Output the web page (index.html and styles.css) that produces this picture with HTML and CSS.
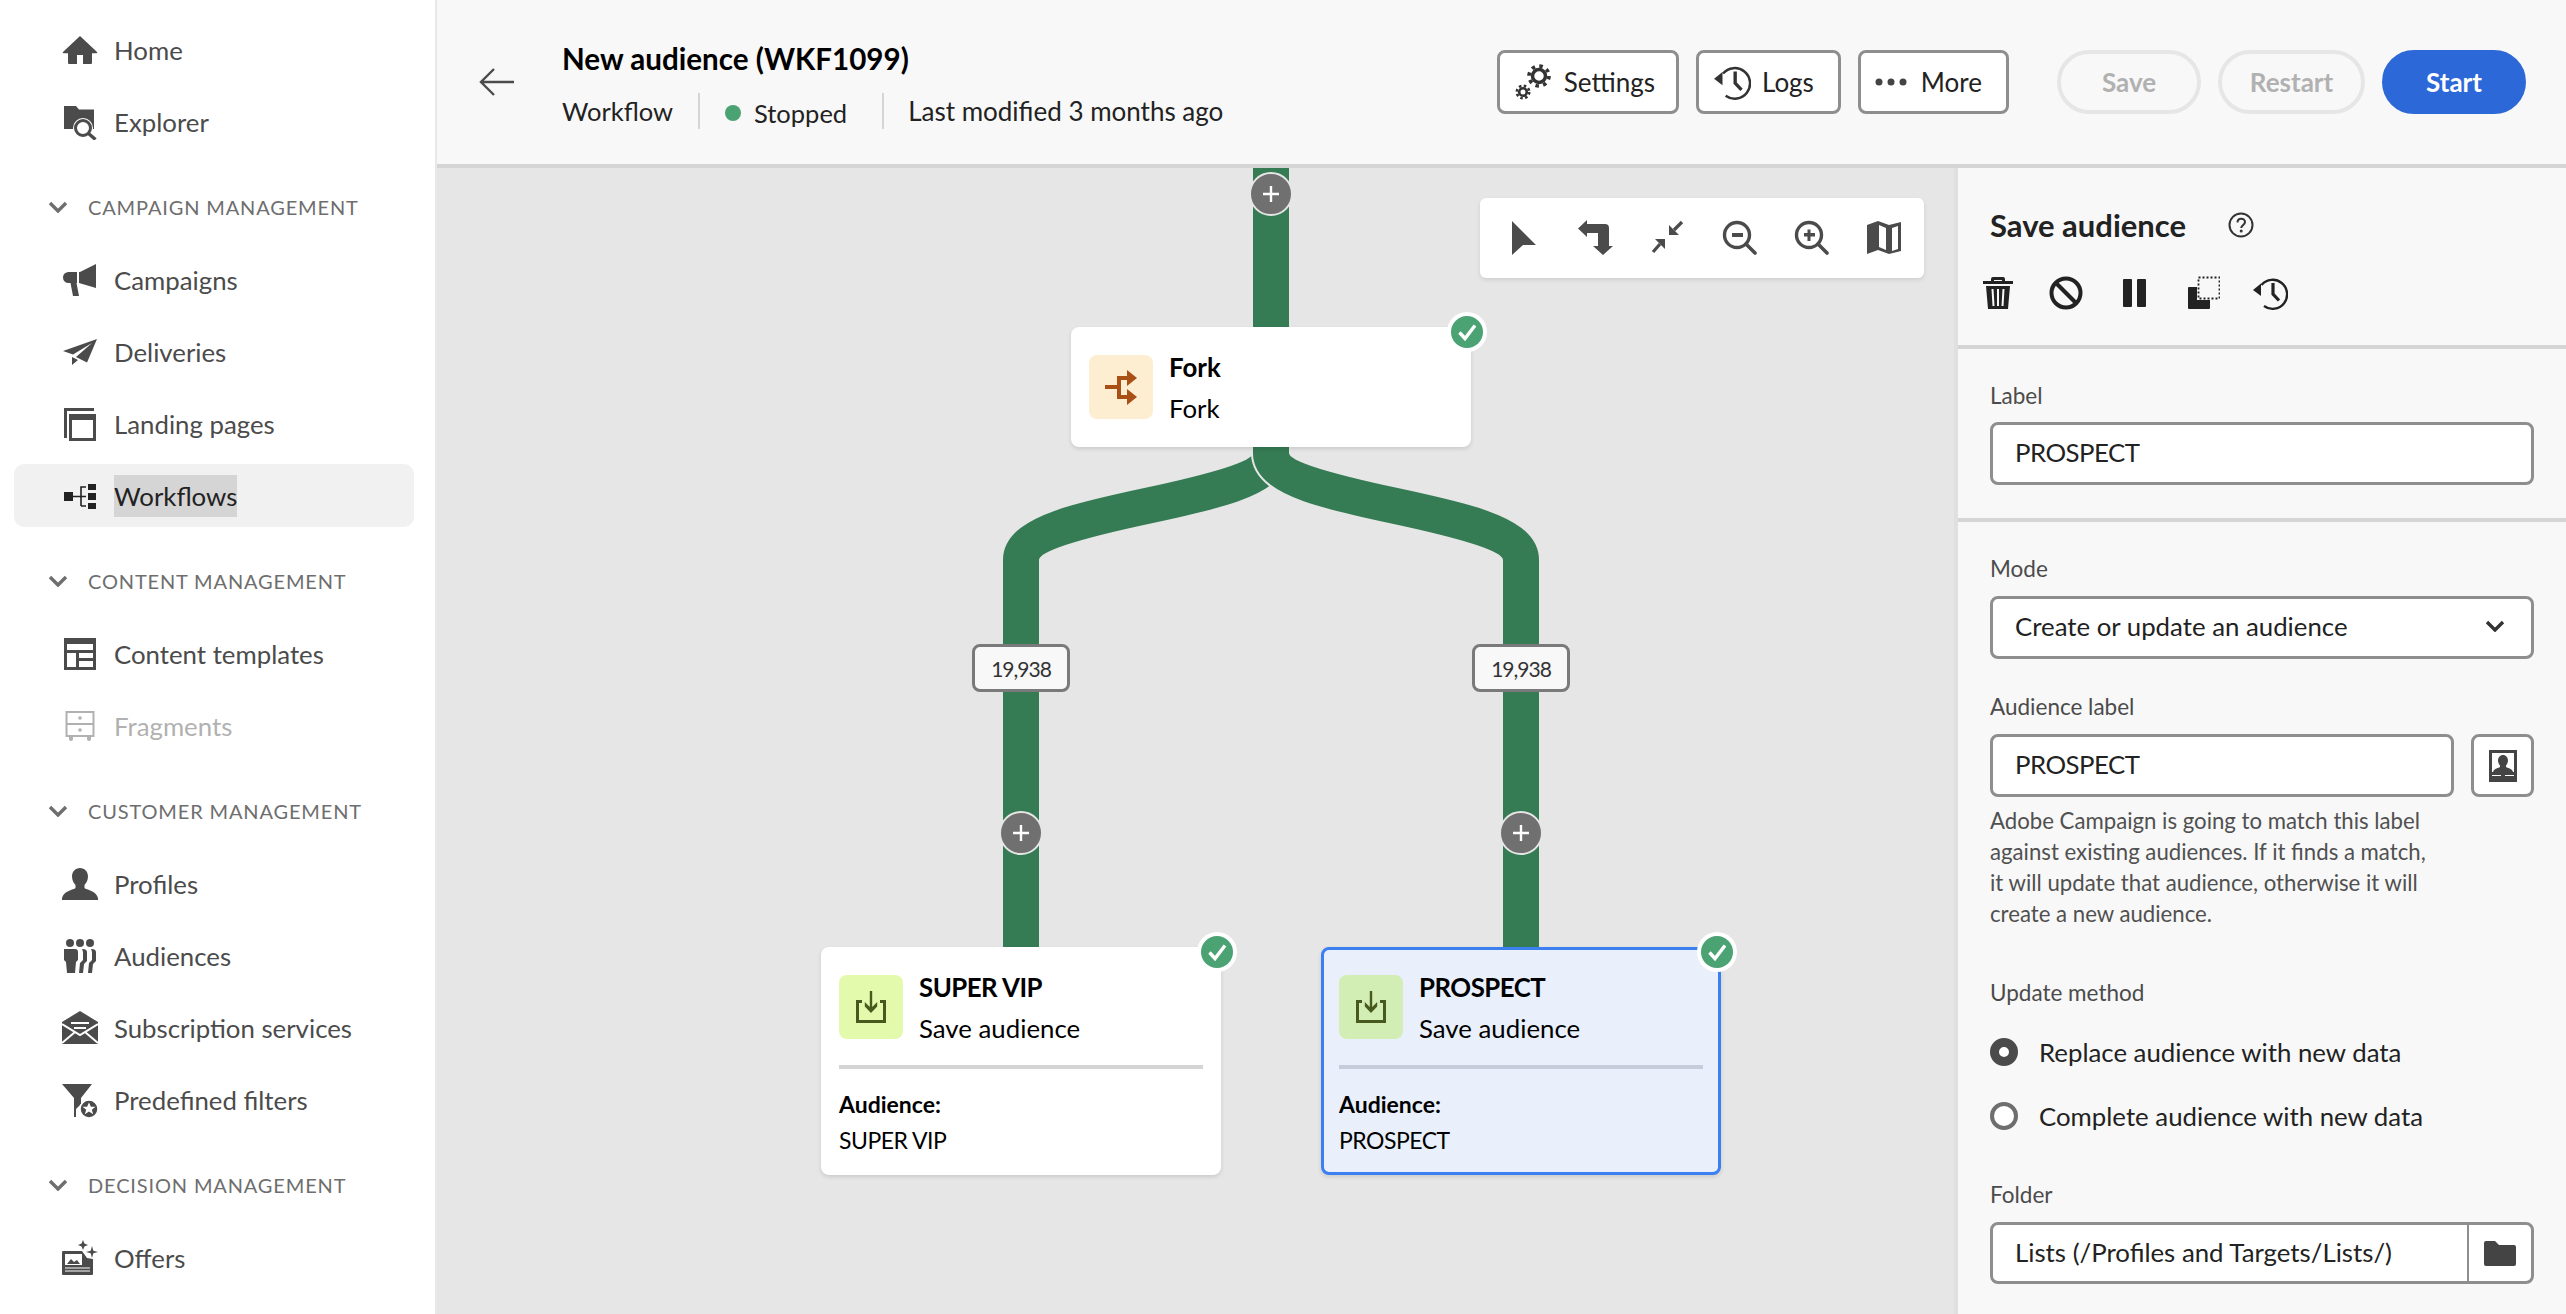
FILE: index.html
```html
<!DOCTYPE html>
<html lang="en">
<head>
    <meta charset="UTF-8">
    <title>New audience (WKF1099)</title>
    <link rel="stylesheet" href="styles.css">
</head>
<body>

<!-- shared icons -->
<svg class="sprite" xmlns="http://www.w3.org/2000/svg">
    <symbol id="i-chevron" viewBox="0 0 20 12"><path d="M2 2l8 8 8-8" fill="none" stroke="currentColor" stroke-width="3.4"/></symbol>
    <symbol id="i-history" viewBox="0 0 36 36"><path d="M9.500 10A14.500 14.500 0 1 1 12 31" fill="none" stroke="currentColor" stroke-width="2.400"/><path d="M1 15l8-6.500V21z" fill="currentColor"/><path d="M21 8v11l6 6.500" fill="none" stroke="currentColor" stroke-width="3.200"/></symbol>
    <symbol id="i-plus" viewBox="0 0 20 20"><path d="M10 2v16M2 10h16" stroke="currentColor" stroke-width="2.400"/></symbol>
    <symbol id="i-check" viewBox="0 0 40 40"><circle cx="20" cy="20" r="20" fill="#fff"/><circle cx="20" cy="20" r="16" fill="#4ba273"/><path d="M12.500 20.500l5.500 6 10-13" fill="none" stroke="#fff" stroke-width="3.400"/></symbol>
    <symbol id="i-save" viewBox="0 0 32 32"><path d="M1 9h6v3H4v17h24V12h-3V9h6v23H1z" fill="currentColor"/><path d="M14.800 0h2.400v16l5-5v4.500L16 22l-6.200-6.500V11l5 5z" fill="currentColor"/></symbol>
</svg>

<div class="app">

    <nav class="sidebar">
        <a class="nav-item">
            <svg class="nav-icon" viewBox="0 0 36 36"><path d="M18 4 1 20a.7.7 0 0 0 .5 1.200H6V31a1 1 0 0 0 1 1h8v-9h6v9h8a1 1 0 0 0 1-1v-9.800h4.500A.7.7 0 0 0 35 20z" fill="currentColor"/></svg>
            <span>Home</span>
        </a>
        <a class="nav-item">
            <svg class="nav-icon" viewBox="0 0 36 36"><path d="M2 2h12l3 3.500h15V25H2z" fill="currentColor"/><circle cx="21" cy="24" r="10" fill="#fff"/><circle cx="21" cy="24" r="7.500" fill="#fff" stroke="currentColor" stroke-width="3"/><path d="M26.500 29.500l7 6" stroke="currentColor" stroke-width="3.400"/></svg>
            <span>Explorer</span>
        </a>

        <div class="nav-section">
            <svg class="chev"><use href="#i-chevron"/></svg>
            <span>Campaign management</span>
        </div>
        <a class="nav-item">
            <svg class="nav-icon" viewBox="0 0 36 36"><path d="M34 2v24l-17-5h-2.500l2.500 13h-6L8.500 21H6.500a5.500 5.500 0 0 1 0-11H18z" fill="currentColor"/><path d="M16 10v11" stroke="#fff" stroke-width="2"/></svg>
            <span>Campaigns</span>
        </a>
        <a class="nav-item">
            <svg class="nav-icon" viewBox="0 0 36 36"><path d="M35 5 1 17l10 3.500L30 9 14 23l11 5.500zM10 23v8l6-5z" fill="currentColor"/></svg>
            <span>Deliveries</span>
        </a>
        <a class="nav-item">
            <svg class="nav-icon" viewBox="0 0 36 36"><path fill-rule="evenodd" d="M2 2h30v3H5v27H2zM7 8h27v27H7zM10 14v18h21V14z" fill="currentColor"/></svg>
            <span>Landing pages</span>
        </a>
        <a class="nav-item is-active">
            <svg class="nav-icon" viewBox="0 0 36 36"><path d="M2 14h9v9H2zM26 6h8v6h-8zM26 15h8v7h-8zM26 25h8v6h-8z" fill="currentColor"/><path d="M11 18.500h13M19 28V9h5M19 28h5" fill="none" stroke="currentColor" stroke-width="1.600"/></svg>
            <span class="nav-selected">Workflows</span>
        </a>

        <div class="nav-section">
            <svg class="chev"><use href="#i-chevron"/></svg>
            <span>Content management</span>
        </div>
        <a class="nav-item">
            <svg class="nav-icon" viewBox="0 0 36 36"><path fill-rule="evenodd" d="M2 2h32v32H2zM5 8v6h26V8zM5 17v14h9V17zM17 17v5h14v-5zM17 25v6h14v-6z" fill="currentColor"/></svg>
            <span>Content templates</span>
        </a>
        <a class="nav-item is-disabled">
            <svg class="nav-icon" viewBox="0 0 36 36"><path d="M4.500 4h27v24h-27zM4.500 16h27" fill="none" stroke="currentColor" stroke-width="2"/><circle cx="18" cy="10" r="1.800" fill="currentColor"/><circle cx="18" cy="22" r="1.800" fill="currentColor"/><path d="M7 29h4v2a2 2 0 0 1-4 0zM25 29h4v2a2 2 0 0 1-4 0z" fill="currentColor"/></svg>
            <span>Fragments</span>
        </a>

        <div class="nav-section">
            <svg class="chev"><use href="#i-chevron"/></svg>
            <span>Customer management</span>
        </div>
        <a class="nav-item">
            <svg class="nav-icon" viewBox="0 0 36 36"><path d="M18 2c4.500 0 8 3.500 8 8.500 0 4-2 7-3.500 8.500v3c2 2 11.500 2.500 13.500 10v2H0v-2c2-7.500 11.500-8 13.500-10v-3C12 17.500 10 14.500 10 10.500 10 5.500 13.500 2 18 2z" fill="currentColor"/></svg>
            <span>Profiles</span>
        </a>
        <a class="nav-item">
            <svg class="nav-icon" viewBox="0 0 36 36"><circle cx="8" cy="5" r="4" fill="currentColor"/><circle cx="18" cy="5" r="4" fill="currentColor"/><circle cx="28" cy="5" r="4" fill="currentColor"/><path d="M2 11h11c2 0 3 1 3 3v8l-2 2-1 11H5L4 24l-2-2zM19 11h2c2 0 4 1 4 3v9l-3 3-1 9h-4l1-10 3-3v-7c0-2-.5-3-1-4zM28 11h2c2 0 4 1 4 3v9l-3 3-1 9h-4l1-10 3-3v-7c0-2-.5-3-1-4z" fill="currentColor"/></svg>
            <span>Audiences</span>
        </a>
        <a class="nav-item">
            <svg class="nav-icon" viewBox="0 0 36 36"><path d="M18 1 0 12v22h36V12z" fill="currentColor"/><path d="M9 13h18M12 18h12M0 14l18 11 18-11M0 33l13-11M36 33 23 22" fill="none" stroke="#fff" stroke-width="2"/></svg>
            <span>Subscription services</span>
        </a>
        <a class="nav-item">
            <svg class="nav-icon" viewBox="0 0 36 36"><path d="M0 2h30L19 16v6l-5 5v8h-2V16z" fill="currentColor"/><circle cx="27" cy="27" r="9" fill="currentColor" stroke="#fff" stroke-width="1.500"/><path d="M27 20.500l1.900 4.300h4.600l-3.700 2.900 1.400 4.600-4.200-2.700-4.200 2.700 1.400-4.600-3.700-2.900h4.600z" fill="#fff"/></svg>
            <span>Predefined filters</span>
        </a>

        <div class="nav-section">
            <svg class="chev"><use href="#i-chevron"/></svg>
            <span>Decision management</span>
        </div>
        <a class="nav-item">
            <svg class="nav-icon" viewBox="0 0 36 36"><path d="M0 12a1 1 0 0 1 1-1h19l5 7 6 1v15a1 1 0 0 1-1 1H1a1 1 0 0 1-1-1z" fill="currentColor"/><path d="M3 14h17v11H3z" fill="#fff"/><path d="M5 24l4-5 3 3 3-2 3 4z" fill="currentColor"/><path d="M3 28h25M3 31h25" stroke="#fff" stroke-width="1.200"/><path d="M21 0l1.400 3.600L26 5l-3.600 1.400L21 10l-1.400-3.600L16 5l3.600-1.400zM30 6l1.300 4.700L36 12l-4.700 1.300L30 18l-1.300-4.700L24 12l4.700-1.300z" fill="currentColor"/></svg>
            <span>Offers</span>
        </a>
    </nav>

    <div class="main">
        <header class="topbar">
            <svg class="back" viewBox="0 0 36 30"><path d="M35 15H3M15 2 2 15l13 13" fill="none" stroke="currentColor" stroke-width="2.400"/></svg>
            <div class="title-group">
                <h1>New audience (WKF1099)</h1>
                <div class="meta">
                    <span class="meta-item">Workflow</span>
                    <span class="meta-item status"><i class="dot"></i>Stopped</span>
                    <span class="meta-item">Last modified 3 months ago</span>
                </div>
            </div>
            <div class="actions">
                <button class="btn btn-settings">
                    <svg class="btn-icon" viewBox="0 0 38 38"><circle cx="24" cy="13" r="6.500" fill="none" stroke="currentColor" stroke-width="3.500"/><circle cx="24" cy="13" r="10" fill="none" stroke="currentColor" stroke-width="3.600" stroke-dasharray="3.500 4.350"/><circle cx="8" cy="29" r="3.800" fill="none" stroke="currentColor" stroke-width="2.600"/><circle cx="8" cy="29" r="6.200" fill="none" stroke="currentColor" stroke-width="2.600" stroke-dasharray="2.500 2.370"/></svg>
                    Settings
                </button>
                <button class="btn">
                    <svg class="btn-icon"><use href="#i-history"/></svg>
                    Logs
                </button>
                <button class="btn btn-more">
                    <svg class="btn-icon" viewBox="0 0 32 32"><circle cx="4" cy="16" r="3.500"/><circle cx="16" cy="16" r="3.500"/><circle cx="28" cy="16" r="3.500"/></svg>
                    More
                </button>
                <button class="pill pill-off pill-first">Save</button>
                <button class="pill pill-off pill-wide">Restart</button>
                <button class="pill pill-start">Start</button>
            </div>
        </header>

        <div class="workspace">
            <section class="canvas">
                <svg class="wires" viewBox="0 0 1517 1146">
                    <defs>
                        <clipPath id="seam"><path d="M800 285h40v45h-40z"/></clipPath>
                    </defs>
                    <g fill="none" stroke="#357b53" stroke-width="36">
                        <path d="M834 0V170"/>
                        <path d="M834 270V285C834 338 584 338 584 392V790"/>
                    </g>
                    <path d="M834 285C834 338 1084 338 1084 392" fill="none" stroke="#e6e6e6" stroke-width="40" clip-path="url(#seam)"/>
                    <path d="M834 270V285C834 338 1084 338 1084 392V790" fill="none" stroke="#357b53" stroke-width="36"/>
                </svg>

                <div class="plus plus-top"><svg><use href="#i-plus"/></svg></div>
                <div class="plus plus-left"><svg><use href="#i-plus"/></svg></div>
                <div class="plus plus-right"><svg><use href="#i-plus"/></svg></div>
                <div class="count count-left">19,938</div>
                <div class="count count-right">19,938</div>

                <div class="toolbar">
                    <svg viewBox="0 0 36 36"><path d="M7 1l24 24H18L7 35z"/></svg>
                    <svg viewBox="0 0 36 36"><path d="M1 8.500 10 0v4h18a4 4 0 0 1 4 4v18h4l-10 9-10-9h5V13H10v4z"/></svg>
                    <svg viewBox="0 0 36 36"><path d="M20 15V5l10 10zM16 19v10L6 19z"/><path d="M25 10l8-8M11 24l-7 8" stroke="#4b4b4b" stroke-width="3.200"/></svg>
                    <svg viewBox="0 0 36 36"><circle cx="16" cy="15" r="12.500" fill="none" stroke="#4b4b4b" stroke-width="3.400"/><path d="M25 24l9 9" stroke="#4b4b4b" stroke-width="3.600" stroke-linecap="round"/><path d="M11 13h11v4H11z"/></svg>
                    <svg viewBox="0 0 36 36"><circle cx="16" cy="15" r="12.500" fill="none" stroke="#4b4b4b" stroke-width="3.400"/><path d="M25 24l9 9" stroke="#4b4b4b" stroke-width="3.600" stroke-linecap="round"/><path d="M11 13h3.500V9.500h3V13H22v3.500h-4.500V21h-3v-4.500H11z"/></svg>
                    <svg viewBox="0 0 36 36"><path fill-rule="evenodd" d="M2 5l11-4 11 4 12-3v29l-12 3-11-4-11 4zM14 5v22l7 3V8zM27 8v23l6-2V6z"/></svg>
                </div>

                <div class="node node-fork">
                    <div class="node-head">
                        <div class="node-icon icon-fork">
                            <svg viewBox="0 0 32 36"><path d="M0 16h12V7h10V1l10 8-10 8v-6h-6v15h6v-6l10 8-10 8v-6H12V20H0z"/></svg>
                        </div>
                        <div class="node-text">
                            <strong>Fork</strong>
                            <span>Fork</span>
                        </div>
                    </div>
                    <svg class="node-check"><use href="#i-check"/></svg>
                </div>

                <div class="node node-save node-vip">
                    <div class="node-head">
                        <div class="node-icon icon-save"><svg><use href="#i-save"/></svg></div>
                        <div class="node-text">
                            <strong class="caps">SUPER VIP</strong>
                            <span>Save audience</span>
                        </div>
                    </div>
                    <hr class="node-rule">
                    <div class="node-foot">
                        <strong>Audience:</strong>
                        <span class="caps">SUPER VIP</span>
                    </div>
                    <svg class="node-check"><use href="#i-check"/></svg>
                </div>

                <div class="node node-save node-prospect is-selected">
                    <div class="node-head">
                        <div class="node-icon icon-save"><svg><use href="#i-save"/></svg></div>
                        <div class="node-text">
                            <strong class="caps">PROSPECT</strong>
                            <span>Save audience</span>
                        </div>
                    </div>
                    <hr class="node-rule">
                    <div class="node-foot">
                        <strong>Audience:</strong>
                        <span class="caps">PROSPECT</span>
                    </div>
                    <svg class="node-check"><use href="#i-check"/></svg>
                </div>
            </section>

            <aside class="panel">
                <div class="panel-block panel-head">
                    <div class="panel-title">
                        <h2>Save audience</h2>
                        <svg class="help" viewBox="0 0 26 26"><circle cx="13" cy="13" r="11.500" fill="none" stroke="currentColor" stroke-width="2"/><path d="M9.500 10.500c0-5 7.500-5 7.500-.5 0 3-3.500 3-3.800 6" fill="none" stroke="currentColor" stroke-width="2"/><circle cx="13.200" cy="19" r="1.500" fill="currentColor"/></svg>
                    </div>
                    <div class="panel-tools">
                        <svg viewBox="0 0 36 36"><path fill-rule="evenodd" d="M11 6V4a2 2 0 0 1 2-2h10a2 2 0 0 1 2 2v2h8v3H3V6zM14 6h8V5h-8zM6 11h24l-2 23H8zM11.500 14l1 17h2l-1-17zM17 14v17h2V14zM22.500 14l-1 17h2l1-17z"/></svg>
                        <svg viewBox="0 0 36 36"><circle cx="18" cy="18" r="14.500" fill="none" stroke="#222" stroke-width="4"/><path d="M8 8l20 20" stroke="#222" stroke-width="4"/></svg>
                        <svg viewBox="0 0 36 36"><rect x="7" y="4" width="9" height="28" rx="1"/><rect x="21" y="4" width="9" height="28" rx="1"/></svg>
                        <svg viewBox="0 0 36 36"><path d="M4 13a1 1 0 0 1 1-1h8v13h13v8a1 1 0 0 1-1 1H5a1 1 0 0 1-1-1z"/><path d="M14.500 2.500H35.500V23.500H14.500z" fill="none" stroke="#222" stroke-width="1.800" stroke-dasharray="2 2"/></svg>
                        <svg class="tool-history"><use href="#i-history"/></svg>
                    </div>
                </div>

                <div class="panel-block panel-label">
                    <label>Label</label>
                    <div class="field"><span class="caps">PROSPECT</span></div>
                </div>

                <div class="panel-block panel-form">
                    <label>Mode</label>
                    <div class="field field-select">
                        Create or update an audience
                        <svg class="chev chev-dark"><use href="#i-chevron"/></svg>
                    </div>

                    <label class="spaced">Audience label</label>
                    <div class="field-row">
                        <div class="field"><span class="caps">PROSPECT</span></div>
                        <button class="field-btn">
                            <svg viewBox="0 0 30 34"><path fill-rule="evenodd" d="M1 1h28v32H1zM4 4v19h22V4zM4 26v1h9v-1zM17 26v1h9v-1z"/><path d="M15 6c3 0 5 2.500 5 5.500 0 2-1 4-2 5v1.500c1 1 6 1 7 5H5c1-4 6-4 7-5v-1.500c-1-1-2-3-2-5C10 8.500 12 6 15 6z"/></svg>
                        </button>
                    </div>
                    <p class="help-text">Adobe Campaign is going to match this label<br>against existing audiences. If it finds a match,<br>it will update that audience, otherwise it will<br>create a new audience.</p>

                    <label class="spaced-lg">Update method</label>
                    <div class="radio-group">
                        <div class="radio-row"><i class="radio is-on"></i>Replace audience with new data</div>
                        <div class="radio-row"><i class="radio"></i>Complete audience with new data</div>
                    </div>

                    <label class="spaced-folder">Folder</label>
                    <div class="field field-folder">
                        <span class="folder-value">Lists (/Profiles and Targets/Lists/)</span>
                        <span class="folder-btn">
                            <svg viewBox="0 0 32 26"><path d="M0 3a2 2 0 0 1 2-2h9l4 4h15a2 2 0 0 1 2 2v17a2 2 0 0 1-2 2H2a2 2 0 0 1-2-2z"/></svg>
                        </span>
                    </div>
                </div>
            </aside>
        </div>
    </div>
</div>

</body>
</html>
```

FILE: styles.css
```css
* {
    box-sizing: border-box;
}

html, body {
    margin: 0;
    padding: 0;
    height: 100%;
    overflow: hidden;
}

body {
    font-family: "Lato", "Noto Sans", sans-serif;
    font-size: 25.8px;
    color: #222;
    background-color: #fff;
}

.sprite {
    display: none;
}

button {
    font-family: inherit;
}

.caps {
    letter-spacing: -0.5px;
}

.app {
    display: flex;
    width: 2566px;
    height: 1314px;
}

/* sidebar */

.sidebar {
    width: 437px;
    flex-shrink: 0;
    padding-top: 14px;
    background-color: #fff;
    border-right: 2px solid #e8e8e8;
    color: #4b4b4b;
}

.nav-item {
    display: flex;
    align-items: center;
    height: 72px;
    padding-left: 62px;
    position: relative;
}

.nav-icon {
    width: 36px;
    height: 36px;
    margin-right: 16px;
    flex-shrink: 0;
}

.nav-item.is-active {
    color: #222;
}

.nav-item.is-active::before {
    content: "";
    position: absolute;
    left: 14px;
    right: 21px;
    top: 4px;
    bottom: 5px;
    background-color: #f1f1f1;
    border-radius: 10px;
}

.nav-item.is-active > * {
    position: relative;
}

.nav-selected {
    background-color: #d5d5d5;
    line-height: 42px;
}

.nav-item.is-disabled {
    color: #b1b1b1;
}

.nav-section {
    display: flex;
    align-items: center;
    height: 86px;
    padding: 12px 0 0 48px;
    font-size: 20px;
    letter-spacing: 0.85px;
    text-transform: uppercase;
    color: #6e6e6e;
}

.chev {
    width: 20px;
    height: 12px;
    margin-right: 20px;
    color: #6e6e6e;
}

/* top bar */

.main {
    flex: 1;
    display: flex;
    flex-direction: column;
    min-width: 0;
}

.topbar {
    display: flex;
    align-items: center;
    height: 168px;
    padding: 0 40px 0 42px;
    background-color: #f8f8f8;
    border-bottom: 4px solid #d5d5d5;
}

.back {
    width: 36px;
    height: 30px;
    margin-right: 47px;
    color: #4b4b4b;
}

.title-group {
    margin-top: 6px;
}

.title-group h1 {
    margin: 0 0 16px;
    font-size: 29.6px;
    line-height: 36px;
    font-weight: 700;
    color: #000;
}

.meta {
    display: flex;
    align-items: center;
    font-size: 25.5px;
}

.meta-item {
    display: flex;
    align-items: center;
    height: 36px;
    padding-right: 25px;
    margin-right: 25px;
    border-right: 2px solid #d5d5d5;
}

.meta-item:last-child {
    margin-right: 0;
    padding-right: 0;
    margin-left: -1px;
    font-size: 26px;
    border-right: none;
}

.dot {
    width: 16px;
    height: 16px;
    margin-right: 13px;
    border-radius: 50%;
    background-color: #4ba273;
}

.status {
    padding-top: 3px;
    padding-right: 35px;
}

.actions {
    display: flex;
    align-items: center;
    gap: 17px;
    margin-left: auto;
}

.btn {
    display: flex;
    align-items: center;
    height: 64px;
    padding: 0 24px 0 14px;
    font-size: 26px;
    color: #222;
    background-color: #fff;
    border: 3px solid #8e8e8e;
    border-radius: 8px;
}

.btn-settings {
    padding: 0 21px 0 15px;
}

.btn-icon {
    width: 38px;
    height: 38px;
    margin-right: 11px;
    color: #333;
    fill: #444;
}

.btn-more .btn-icon {
    width: 32px;
    height: 32px;
    margin-right: 14px;
}

.pill {
    height: 64px;
    width: 144px;
    font-size: 26px;
    font-weight: 700;
    border-radius: 32px;
    border: 4px solid #e6e6e6;
    background: transparent;
}

.pill-off {
    color: #b1b1b1;
}

.pill-first {
    margin-left: 31px;
}

.pill-wide {
    width: 147px;
}

.pill-start {
    color: #fff;
    background-color: #2c68d8;
    border-color: #2c68d8;
}

/* canvas */

.workspace {
    flex: 1;
    display: flex;
    min-height: 0;
}

.canvas {
    position: relative;
    width: 1517px;
    flex-shrink: 0;
    overflow: hidden;
    background-color: #e6e6e6;
}

.wires {
    position: absolute;
    left: 0;
    top: 0;
    width: 1517px;
    height: 1146px;
}

.plus {
    position: absolute;
    display: flex;
    align-items: center;
    justify-content: center;
    width: 44px;
    height: 44px;
    border-radius: 50%;
    background-color: #707070;
    border: 2px solid #e6e6e6;
    color: #fff;
}

.plus svg {
    width: 20px;
    height: 20px;
}

.plus-top {
    left: 812px;
    top: 4px;
}

.plus-left {
    left: 562px;
    top: 643px;
}

.plus-right {
    left: 1062px;
    top: 643px;
}

.count {
    position: absolute;
    top: 476px;
    width: 98px;
    height: 48px;
    display: flex;
    align-items: center;
    justify-content: center;
    font-size: 21px;
    letter-spacing: -1px;
    color: #333;
    background-color: #f8f8f8;
    border: 3px solid #7a7a7a;
    border-radius: 8px;
}

.count-left {
    left: 535px;
}

.count-right {
    left: 1035px;
}

.toolbar {
    position: absolute;
    left: 1043px;
    top: 30px;
    display: flex;
    align-items: center;
    gap: 36px;
    width: 444px;
    height: 80px;
    padding-left: 25px;
    background-color: #fff;
    border-radius: 6px;
    box-shadow: 0 2px 4px rgba(0, 0, 0, 0.1);
    fill: #4b4b4b;
}

.toolbar svg {
    width: 36px;
    height: 36px;
}

/* nodes */

.node {
    position: absolute;
    width: 400px;
    background-color: #fff;
    border-radius: 8px;
    box-shadow: 0 2px 4px rgba(0, 0, 0, 0.12);
    color: #000;
}

.node-fork {
    left: 634px;
    top: 159px;
    height: 120px;
    padding: 28px 18px;
}

.node-save {
    top: 779px;
    height: 228px;
    padding: 28px 18px;
}

.node-vip {
    left: 384px;
}

.node-prospect {
    left: 884px;
}

.is-selected {
    background-color: #e9f0fb;
    border: 3px solid #3b7ff0;
    padding: 25px 15px;
}

.node-head {
    display: flex;
    gap: 16px;
    height: 64px;
}

.node-icon {
    display: flex;
    align-items: center;
    justify-content: center;
    width: 64px;
    height: 64px;
    border-radius: 8px;
}

.icon-fork {
    background-color: #fdeed1;
    fill: #a85016;
}

.icon-fork svg {
    width: 32px;
    height: 36px;
}

.icon-save {
    background-color: #e3f9ab;
    color: #47591c;
}

.is-selected .icon-save {
    background-color: #d2eeb4;
}

.icon-save svg {
    width: 32px;
    height: 32px;
}

.node-text {
    display: flex;
    flex-direction: column;
    gap: 7px;
    margin-top: -5px;
    line-height: 34px;
}

.node-rule {
    height: 4px;
    margin: 26px 0 0;
    border: none;
    background-color: #d5d5d5;
}

.is-selected .node-rule {
    background-color: #c5ccda;
}

.node-foot {
    display: flex;
    flex-direction: column;
    gap: 8px;
    margin-top: 21px;
    font-size: 23px;
    line-height: 28px;
}

.node-check {
    position: absolute;
    width: 40px;
    height: 40px;
    right: -16px;
    top: -15px;
}

.is-selected .node-check {
    right: -19px;
    top: -18px;
}

/* right panel */

.panel {
    flex: 1;
    min-width: 0;
    background-color: #f8f8f8;
    border-left: 4px solid #e0e0e0;
}

.panel-block {
    padding: 0 32px;
}

.panel-head {
    height: 181px;
    padding-top: 39px;
    border-bottom: 4px solid #d5d5d5;
}

.panel-title {
    display: flex;
    align-items: center;
    height: 36px;
}

.panel-title h2 {
    margin: 0;
    font-size: 31px;
    font-weight: 700;
}

.help {
    width: 26px;
    height: 26px;
    margin-left: 42px;
    color: #333;
}

.panel-tools {
    display: flex;
    align-items: center;
    gap: 32px;
    margin-top: 32px;
    margin-left: -10px;
    fill: #222;
}

.panel-tools svg {
    width: 36px;
    height: 36px;
}

.tool-history {
    color: #222;
}

.panel-label {
    height: 173px;
    padding-top: 33px;
    border-bottom: 4px solid #d5d5d5;
}

.panel-form {
    padding-top: 33px;
}

label {
    display: block;
    height: 30px;
    margin-bottom: 11px;
    font-size: 22.5px;
    line-height: 28px;
    color: #4b4b4b;
}

.spaced {
    margin-top: 34px;
}

.spaced-lg {
    margin-top: 50px;
}

.spaced-folder {
    margin-top: 33px;
}

.panel-label label {
    margin-bottom: 10px;
}

.field {
    display: flex;
    align-items: center;
    height: 63px;
    padding: 0 22px 3px;
    color: #222;
    background-color: #fff;
    border: 3px solid #8e8e8e;
    border-radius: 8px;
}

.field-select {
    justify-content: space-between;
}

.chev-dark {
    margin: 0 4px 0 0;
    color: #333;
}

.field-row {
    display: flex;
    gap: 17px;
}

.field-row .field {
    flex: 1;
}

.field-btn {
    display: flex;
    align-items: center;
    justify-content: center;
    width: 63px;
    height: 63px;
    padding: 0;
    background-color: #fff;
    border: 3px solid #8e8e8e;
    border-radius: 8px;
    fill: #444;
}

.field-btn svg {
    width: 30px;
    height: 34px;
}

.help-text {
    margin: 8px 0 0;
    font-size: 22.2px;
    line-height: 31px;
    color: #505050;
}

.radio-row {
    display: flex;
    align-items: center;
    height: 64px;
}

.radio {
    width: 28px;
    height: 28px;
    margin-right: 21px;
    background-color: #fff;
    border: 4px solid #6e6e6e;
    border-radius: 50%;
}

.radio.is-on {
    border: 9px solid #4b4b4b;
}

.field-folder {
    padding: 0;
    height: 62px;
}

.folder-value {
    flex: 1;
    padding: 0 0 3px 22px;
}

.folder-btn {
    display: flex;
    align-items: center;
    justify-content: center;
    width: 64px;
    height: 100%;
    border-left: 2px solid #8e8e8e;
    fill: #444;
}

.folder-btn svg {
    width: 32px;
    height: 26px;
}
```
